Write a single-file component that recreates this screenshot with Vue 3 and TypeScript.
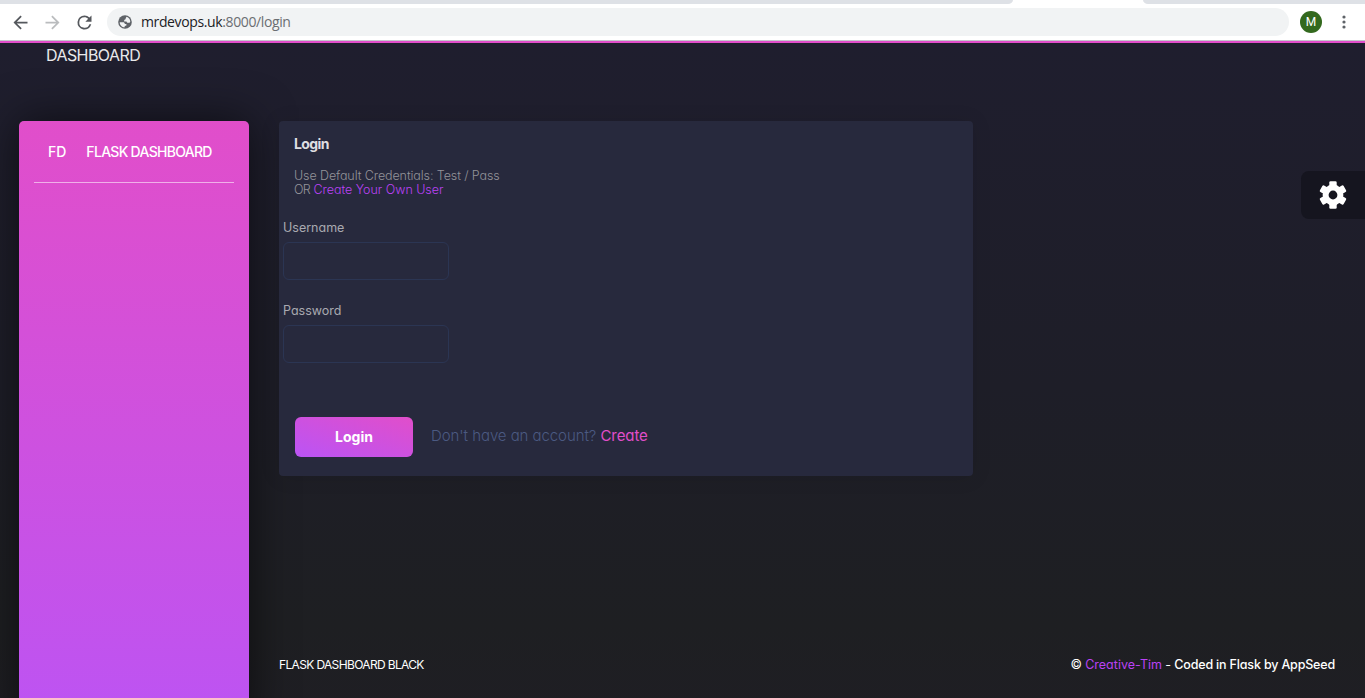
<script setup lang="ts">
import { ref } from 'vue'

interface Field {
  id: string
  label: string
  type: string
}

const fields: Field[] = [
  { id: 'username', label: 'Username', type: 'text' },
  { id: 'password', label: 'Password', type: 'password' },
]
const values = ref<Record<string, string>>({ username: '', password: '' })
const teeth: number[] = [0, 60, 120]
</script>

<template>
  <div class="window">
    <header class="chrome">
      <div class="tabs">
        <span class="strip strip-left"></span>
        <span class="strip strip-right"></span>
      </div>
      <div class="toolbar">
        <svg class="nav" viewBox="0 0 24 24"><path fill="#55585d" d="M20 11H7.83l5.59-5.59L12 4l-8 8 8 8 1.41-1.41L7.83 13H20v-2z" /></svg>
        <svg class="nav" viewBox="0 0 24 24"><path fill="#babcbe" d="M12 4l-1.41 1.41L16.17 11H4v2h12.17l-5.58 5.59L12 20l8-8z" /></svg>
        <svg class="nav" viewBox="0 0 24 24"><path fill="#55585d" d="M17.65 6.35A7.96 7.96 0 0 0 12 4a8 8 0 1 0 7.73 10h-2.08A6 6 0 1 1 12 6c1.66 0 3.14.69 4.22 1.78L13 11h7V4l-2.35 2.35z" /></svg>
        <div class="address">
          <svg class="globe" viewBox="0 0 14 14">
            <circle cx="7" cy="7" r="6.8" fill="#5f6368" />
            <path fill="#f1f3f4" d="M8.6 1.8c2.1.7 3.5 2.5 3.7 4.6l-.7 1.3H9.3L8.4 6.4H6.2V4.9l1.3-.7.3-1.3z" />
            <path fill="#f1f3f4" d="M1.7 7.2h3.1c1.4 0 2 .7 2 1.7h1.6v1.5l-1.7.5v1.4C3.9 12.2 1.7 10 1.7 7.2z" />
          </svg>
          <span class="url"><b>mrdevops.uk</b>:8000/login</span>
        </div>
        <span class="avatar">M</span>
        <svg class="dots" viewBox="0 0 4 14"><g fill="#5f6368"><circle cx="2" cy="2" r="1.6" /><circle cx="2" cy="7" r="1.6" /><circle cx="2" cy="12" r="1.6" /></g></svg>
      </div>
    </header>

    <div class="page">
      <nav class="navbar"><span class="t-dash">DASHBOARD</span></nav>

      <div class="body">
        <aside class="sidebar">
          <div class="brand"><span class="t-fd">FD</span><span class="t-brand">FLASK DASHBOARD</span></div>
        </aside>

        <main class="main">
          <section class="card">
            <div class="card-head">
              <h5>Login</h5>
              <p>Use Default Credentials: Test / Pass</p>
              <p><span class="t-or">OR</span> <a>Create Your Own User</a></p>
            </div>
            <div v-for="f in fields" :key="f.id" class="field">
              <label :for="f.id">{{ f.label }}</label>
              <input :id="f.id" v-model="values[f.id]" :type="f.type" />
            </div>
            <div class="actions">
              <button type="button">Login</button>
              <span class="signup">Don't have an account? <a class="t-create">Create</a></span>
            </div>
          </section>

          <footer class="footer">
            <span class="t-black">FLASK DASHBOARD BLACK</span>
            <span class="t-credit">© <a>Creative-Tim</a> - <b>Coded in Flask by AppSeed</b></span>
          </footer>
        </main>
      </div>

      <div class="settings">
        <svg viewBox="0 0 28 28">
          <g fill="#fff">
            <circle cx="14" cy="14" r="10.4" />
            <rect v-for="a in teeth" :key="a" x="10.3" y="0.3" width="7.4" height="27.4" rx="1.3" :transform="`rotate(${a} 14 14)`" />
          </g>
          <circle cx="14" cy="14" r="4.4" fill="#15151f" />
        </svg>
      </div>
    </div>
  </div>
</template>

<style>
body {
  margin: 0;
  overflow: hidden;
}
</style>

<style scoped>
* {
  box-sizing: border-box;
}
.window {
  width: 1365px;
  height: 698px;
  display: flex;
  flex-direction: column;
  overflow: hidden;
  font-family: Inter, "Open Sans", sans-serif;
  font-feature-settings: "cv11" 1;
  white-space: nowrap;
}
.chrome {
  height: 41px;
  flex: none;
  background: #fff;
  border-bottom: 1px solid #c5c8cc;
}
.tabs {
  height: 4px;
  display: flex;
  justify-content: space-between;
}
.strip {
  background: #dee1e6;
  height: 4px;
}
.strip-left {
  width: 1013px;
  border-bottom-right-radius: 5px 4px;
}
.strip-right {
  width: 222px;
  border-bottom-left-radius: 5px 4px;
}
.toolbar {
  height: 36px;
  display: flex;
  align-items: center;
  padding-left: 10px;
}
.nav {
  width: 21px;
  height: 21px;
  margin-right: 11px;
  flex: none;
}
.address {
  width: 1182px;
  height: 28px;
  margin-left: 1px;
  border-radius: 14px;
  background: #f1f3f4;
  display: flex;
  align-items: center;
  padding-left: 11px;
}
.globe {
  width: 14px;
  height: 14px;
}
.url {
  margin-left: 9px;
  font: 14px/20px "Open Sans", sans-serif;
  letter-spacing: -0.38px;
  color: #6b6e72;
}
.url b {
  font-weight: 400;
  color: #202124;
}
.avatar {
  width: 22px;
  height: 22px;
  margin-left: 11px;
  border-radius: 50%;
  background: #33691e;
  color: #fff;
  font: 12px/22px Roboto, sans-serif;
  text-align: center;
}
.dots {
  width: 4px;
  height: 14px;
  margin-left: 19.5px;
}
.page {
  position: relative;
  flex: 1;
  display: flex;
  flex-direction: column;
  border-top: 2px solid #e14eca;
  background: linear-gradient(#1f1e2e 0%, #1e1e28 50%, #1e1f22 85%, #1f1e24 100%);
}
.navbar {
  height: 78px;
  flex: none;
  padding: 1px 0 0 46px;
  font-size: 16px;
  line-height: 22px;
  color: #e9e9eb;
}
.body {
  flex: 1;
  display: flex;
  padding-left: 19px;
}
.sidebar {
  width: 230px;
  height: 608px;
  flex: none;
  padding: 0 15px;
  border-radius: 5px;
  background: linear-gradient(#e14eca, #ba54f5 105%);
  box-shadow: 0 0 45px 0 rgba(0, 0, 0, 0.6);
}
.brand {
  height: 62px;
  display: flex;
  gap: 20px;
  padding-left: 14px;
  border-bottom: 1px solid rgba(255, 255, 255, 0.55);
  font-size: 14px;
  font-weight: 500;
  line-height: 62px;
  color: #fff;
}
.t-brand {
  letter-spacing: -0.7px;
}
.main {
  flex: 1;
  height: 577px;
  display: flex;
  flex-direction: column;
  justify-content: space-between;
  padding: 0 30px;
}
.card {
  width: 694px;
  height: 355px;
  border-radius: 4px;
  background: #27293d;
  box-shadow: 0 1px 20px 0 rgba(0, 0, 0, 0.1);
}
.card-head {
  height: 97px;
  padding: 13px 15px 0;
}
h5 {
  margin: 0 0 15px;
  font-size: 14px;
  font-weight: 700;
  line-height: 20px;
  letter-spacing: -0.6px;
  color: #dedee1;
}
p {
  margin: 0;
  font-size: 12.5px;
  font-weight: 300;
  line-height: 14px;
  letter-spacing: -0.1px;
  color: #939399;
}
p a {
  color: #ba42f4;
  letter-spacing: -0.03px;
}
.t-or {
  letter-spacing: -0.7px;
}
.field {
  height: 83px;
  padding-left: 4px;
}
label {
  display: block;
  width: max-content;
  font-size: 12.5px;
  line-height: 20px;
  color: #a9a9b0;
}
input {
  display: block;
  width: 166px;
  height: 38px;
  margin-top: 4px;
  border: 1px solid #2b3553;
  border-radius: 6px;
  background: transparent;
  color: #fff;
  padding: 0 12px;
}
.actions {
  display: flex;
  align-items: center;
  margin-top: 33px;
  padding-left: 16px;
}
button {
  width: 118px;
  height: 40px;
  border: 0;
  padding: 0;
  border-radius: 6px;
  background: linear-gradient(to bottom left, #e14eca, #ba54f5);
  color: #fff;
  font: 700 14px/20px Inter, sans-serif;
}
.signup {
  margin: -2px 0 0 18px;
  font-size: 15px;
  font-weight: 300;
  line-height: 20px;
  letter-spacing: -0.07px;
  color: #4b5a82;
}
.t-create {
  color: #e14eca;
  font-weight: 400;
}
.footer {
  display: flex;
  justify-content: space-between;
  margin-bottom: 23px;
  font-size: 12px;
  line-height: 20px;
  color: #fff;
}
.footer a {
  color: #ba42f4;
  letter-spacing: 0.02px;
}
.footer b {
  font-weight: 500;
}
.t-black {
  letter-spacing: -0.65px;
}
.t-credit {
  font-size: 12.5px;
  letter-spacing: -0.17px;
}
.settings {
  position: absolute;
  top: 128px;
  right: 0;
  width: 64px;
  height: 48px;
  border-radius: 8px 0 0 8px;
  background: #15151f;
}
.settings svg {
  display: block;
  width: 28px;
  height: 28px;
  margin: 9.5px 0 0 18px;
}
.t-dash {
  letter-spacing: -0.57px;
}
</style>
